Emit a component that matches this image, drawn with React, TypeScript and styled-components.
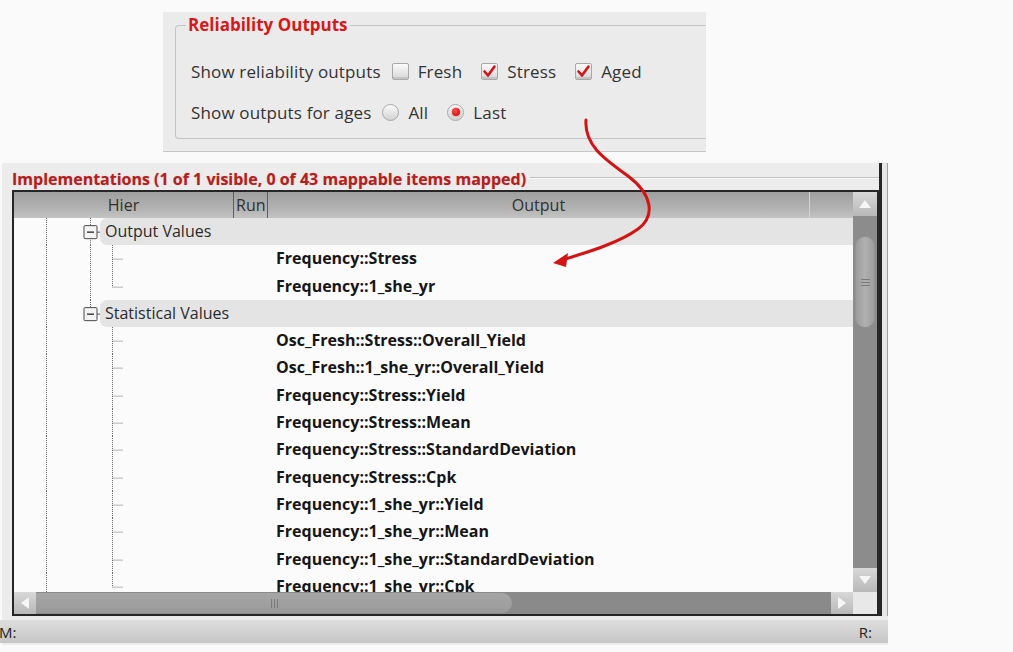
import React from 'react'
import styled, { createGlobalStyle } from 'styled-components'

const ROW_H = 27.3
const MID = ROW_H / 2

const GlobalStyle = createGlobalStyle`
  html, body {
    margin: 0;
    padding: 0;
    background: #fafafa;
  }
  body {
    font-family: 'Open Sans', 'Liberation Sans', sans-serif;
  }
`

interface TreeRow {
  kind: 'group' | 'item'
  label: string
  lastChild?: boolean
  lastGroup?: boolean
}

const rows: TreeRow[] = [
  { kind: 'group', label: 'Output Values' },
  { kind: 'item', label: 'Frequency::Stress' },
  { kind: 'item', label: 'Frequency::1_she_yr', lastChild: true },
  { kind: 'group', label: 'Statistical Values', lastGroup: true },
  { kind: 'item', label: 'Osc_Fresh::Stress::Overall_Yield', lastGroup: true },
  { kind: 'item', label: 'Osc_Fresh::1_she_yr::Overall_Yield', lastGroup: true },
  { kind: 'item', label: 'Frequency::Stress::Yield', lastGroup: true },
  { kind: 'item', label: 'Frequency::Stress::Mean', lastGroup: true },
  { kind: 'item', label: 'Frequency::Stress::StandardDeviation', lastGroup: true },
  { kind: 'item', label: 'Frequency::Stress::Cpk', lastGroup: true },
  { kind: 'item', label: 'Frequency::1_she_yr::Yield', lastGroup: true },
  { kind: 'item', label: 'Frequency::1_she_yr::Mean', lastGroup: true },
  { kind: 'item', label: 'Frequency::1_she_yr::StandardDeviation', lastGroup: true },
  { kind: 'item', label: 'Frequency::1_she_yr::Cpk', lastGroup: true, lastChild: true },
]

const L0 = 32.5
const L1 = 76.5
const L2 = 98.5

const Dots: React.FC<{ x1: number; y1: number; x2: number; y2: number }> = props => (
  <line {...props} stroke="#6a6a6a" strokeWidth={1} strokeDasharray="1 1" />
)

const GroupGuides: React.FC<{ lastGroup?: boolean }> = ({ lastGroup }) => (
  <GuideSvg width={86} height={ROW_H}>
    <Dots x1={L0} y1={0} x2={L0} y2={ROW_H} />
    <Dots x1={L1} y1={0} x2={L1} y2={MID - 6.5} />
    {!lastGroup && <Dots x1={L1} y1={MID + 6.5} x2={L1} y2={ROW_H} />}
    <rect x={70} y={MID - 6} width={13} height={13} fill="#f4f4f4" stroke="#4a4a4a" strokeWidth={1} rx={1} />
    <line x1={73} y1={MID + 0.5} x2={80} y2={MID + 0.5} stroke="#333" strokeWidth={1.4} />
    <line x1={83} y1={MID + 0.5} x2={86} y2={MID + 0.5} stroke="#555" strokeWidth={1} />
  </GuideSvg>
)

const ItemGuides: React.FC<{ lastChild?: boolean; lastGroup?: boolean }> = ({
  lastChild,
  lastGroup,
}) => (
  <GuideSvg width={112} height={ROW_H}>
    <Dots x1={L0} y1={0} x2={L0} y2={ROW_H} />
    {!lastGroup && <Dots x1={L1} y1={0} x2={L1} y2={ROW_H} />}
    <Dots x1={L2} y1={0} x2={L2} y2={lastChild ? MID + 0.5 : ROW_H} />
    <Dots x1={L2} y1={MID + 0.5} x2={109} y2={MID + 0.5} />
  </GuideSvg>
)

const CheckBox: React.FC<{ checked?: boolean }> = ({ checked }) => (
  <Box>
    {checked && (
      <svg width={15} height={15} viewBox="0 0 15 15">
        <path d="M2.5 7.5 L6 11.5 L12.5 2.5" fill="none" stroke="#d41414" strokeWidth={2.6} strokeLinecap="round" strokeLinejoin="round" />
      </svg>
    )}
  </Box>
)

const Radio: React.FC<{ selected?: boolean }> = ({ selected }) => (
  <RadioBox>{selected && <RadioDot />}</RadioBox>
)

export default function App() {
  return (
    <Page>
      <GlobalStyle />
      <TopPanel>
        <GroupBox>
          <Legend>Reliability Outputs</Legend>
          <GroupBody>
            <OptionRow>
              <Caption>Show reliability outputs</Caption>
              <Option>
                <CheckBox />
                Fresh
              </Option>
              <Option>
                <CheckBox checked />
                Stress
              </Option>
              <Option>
                <CheckBox checked />
                Aged
              </Option>
            </OptionRow>
            <OptionRow>
              <Caption>Show outputs for ages</Caption>
              <Option>
                <Radio />
                All
              </Option>
              <Option>
                <Radio selected />
                Last
              </Option>
            </OptionRow>
          </GroupBody>
        </GroupBox>
      </TopPanel>

      <ImplPanel>
        <Upper>
          <Main>
            <TitleBar>
              <PanelTitle>
                Implementations (1 of 1 visible, 0 of 43 mappable items mapped)
              </PanelTitle>
              <TitleRule />
            </TitleBar>
            <TreeBox>
              <TreeArea>
                <Header>
                  <HeaderCell width={220} align="center" sep="dark">
                    Hier
                  </HeaderCell>
                  <HeaderCell width={34} align="left" sep="dark">
                    Run
                  </HeaderCell>
                  <HeaderCell width={542} align="center" sep="light">
                    Output
                  </HeaderCell>
                  <HeaderFill />
                </Header>
                <Body>
                  {rows.map(row =>
                    row.kind === 'group' ? (
                      <Row key={row.label}>
                        <GroupGuides lastGroup={row.lastGroup} />
                        <Band>{row.label}</Band>
                      </Row>
                    ) : (
                      <Row key={row.label}>
                        <HierCell>
                          <ItemGuides lastChild={row.lastChild} lastGroup={row.lastGroup} />
                        </HierCell>
                        <ItemText>{row.label}</ItemText>
                      </Row>
                    ),
                  )}
                </Body>
              </TreeArea>

              <VScroll>
                <ScrollButton>
                  <svg width={12} height={8} viewBox="0 0 12 8">
                    <path d="M0 8 L6 0 L12 8 Z" fill="#f6f6f6" />
                  </svg>
                </ScrollButton>
                <VTrack>
                  <VThumb>
                    <Grip vertical={false}>
                      <i />
                      <i />
                      <i />
                    </Grip>
                  </VThumb>
                </VTrack>
                <ScrollButton>
                  <svg width={12} height={8} viewBox="0 0 12 8">
                    <path d="M0 0 L6 8 L12 0 Z" fill="#f6f6f6" />
                  </svg>
                </ScrollButton>
              </VScroll>

              <HScroll>
                <HButton>
                  <svg width={8} height={12} viewBox="0 0 8 12">
                    <path d="M8 0 L0 6 L8 12 Z" fill="#f6f6f6" />
                  </svg>
                </HButton>
                <HTrack>
                  <HThumb>
                    <Grip vertical>
                      <i />
                      <i />
                      <i />
                    </Grip>
                  </HThumb>
                </HTrack>
                <HButton>
                  <svg width={8} height={12} viewBox="0 0 8 12">
                    <path d="M0 0 L8 6 L0 12 Z" fill="#f6f6f6" />
                  </svg>
                </HButton>
              </HScroll>
              <Corner />
            </TreeBox>
          </Main>
          <RightRim />
        </Upper>
        <StatusBar>
          <StatusText>M:</StatusText>
          <StatusText>R:</StatusText>
        </StatusBar>
      </ImplPanel>

      <Annotation width={1013} height={652} viewBox="0 0 1013 652">
        <path
          d="M586 120 C584 146 606 160 628 176 C652 194 656 216 638 229 C620 242 592 251 562 260"
          fill="none"
          stroke="#d21414"
          strokeWidth={3}
          strokeLinecap="round"
        />
        <path d="M553 263 L568 253 L566 267 Z" fill="#d21414" />
      </Annotation>
    </Page>
  )
}

const Page = styled.div`
  position: relative;
  width: 1013px;
  height: 652px;
  padding-top: 12px;
  box-sizing: border-box;
  overflow: hidden;
  background: #fafafa;
  color: #333;
`

const TopPanel = styled.section`
  margin-left: 163px;
  width: 543px;
  height: 140px;
  box-sizing: border-box;
  padding: 3px 0 0 12px;
  background: #ebebeb;
  border-bottom: 1px solid #c6c6c6;
`

const GroupBox = styled.fieldset`
  margin: 0;
  height: 124px;
  box-sizing: border-box;
  min-width: 0;
  padding: 0 0 0 10px;
  border: 1px solid #c4c4c4;
  border-right: none;
  border-radius: 4px 0 0 4px;
`

const Legend = styled.legend`
  padding: 0 2px;
  line-height: 20px;
  font-size: 17px;
  font-weight: 700;
  color: #d81818;
`

const GroupBody = styled.div`
  display: flex;
  flex-direction: column;
  gap: 11px;
  padding: 21px 0 0 5px;
`

const OptionRow = styled.div`
  display: flex;
  align-items: center;
  gap: 19px;
  height: 30px;
  font-size: 17px;
  letter-spacing: 0.15px;
  color: #333;
  white-space: nowrap;
`

const Caption = styled.span`
  margin-right: -8px;
`

const Option = styled.label`
  display: flex;
  align-items: center;
  gap: 9px;
`

const Box = styled.span`
  display: flex;
  align-items: center;
  justify-content: center;
  width: 17px;
  height: 17px;
  box-sizing: border-box;
  border: 1px solid #a8a8a8;
  border-radius: 2px;
  background: linear-gradient(#fbfbfb, #d6d6d6);
  box-shadow: inset 0 -2px 0 #c4c4c4;
`

const RadioBox = styled.span`
  display: flex;
  align-items: center;
  justify-content: center;
  width: 17px;
  height: 17px;
  box-sizing: border-box;
  border: 1px solid #a8a8a8;
  border-radius: 50%;
  background: linear-gradient(#fbfbfb, #d2d2d2);
`

const RadioDot = styled.span`
  width: 8px;
  height: 8px;
  border-radius: 50%;
  background: radial-gradient(circle at 40% 35%, #ff4a4a, #c40000);
  box-shadow: 0 0 2px rgba(210, 0, 0, 0.6);
`

const ImplPanel = styled.section`
  margin: 11px 0 0 2px;
  width: 886px;
  height: 482px;
  display: flex;
  flex-direction: column;
  background: #ececec;
`

const Upper = styled.div`
  display: flex;
`

const Main = styled.div`
  flex: 1;
  display: flex;
  flex-direction: column;
  padding-left: 10px;
`

const TitleBar = styled.div`
  display: flex;
  align-items: center;
  height: 27px;
  box-sizing: border-box;
  padding-top: 5px;
`

const PanelTitle = styled.span`
  font-size: 16px;
  font-weight: 700;
  color: #b51f1f;
  white-space: nowrap;
  text-shadow: 0 0 1px rgba(190, 30, 30, 0.35);
`

const TitleRule = styled.div`
  flex: 1;
  height: 1px;
  margin: -3px 0 0 4px;
  background: #c2c2c2;
  box-shadow: 0 1px 0 #f8f8f8;
`

const TreeBox = styled.div`
  height: 426px;
  box-sizing: border-box;
  border: 2px solid #262626;
  display: grid;
  grid-template-columns: 1fr 24px;
  grid-template-rows: 1fr 22px;
  background: #fbfbfb;
`

const TreeArea = styled.div`
  display: flex;
  flex-direction: column;
  min-height: 0;
  overflow: hidden;
`

const Header = styled.div`
  display: flex;
  height: 26px;
  flex-shrink: 0;
  background: linear-gradient(#9f9f9f, #b3b3b3 65%, #c3c3c3);
  font-size: 16px;
  color: #303030;
`

const HeaderCell = styled.div<{ width: number; align: 'left' | 'center'; sep: 'dark' | 'light' }>`
  width: ${props => props.width}px;
  box-sizing: border-box;
  line-height: 26px;
  text-align: ${props => props.align};
  padding-left: ${props => (props.align === 'left' ? '2px' : '0')};
  border-right: 1px solid ${props => (props.sep === 'dark' ? '#5e5e5e' : '#d4d4d4')};
  white-space: nowrap;
  overflow: hidden;
`

const HeaderFill = styled.div`
  flex: 1;
`

const Body = styled.div`
  flex: 1;
  overflow: hidden;
  background: #fbfbfb;
`

const Row = styled.div`
  display: flex;
  height: ${ROW_H}px;
`

const GuideSvg = styled.svg`
  display: block;
  flex-shrink: 0;
`

const Band = styled.div`
  flex: 1;
  padding-left: 5px;
  border-radius: 7px 0 0 7px;
  background: #e4e4e4;
  font-size: 16px;
  line-height: ${ROW_H}px;
  color: #2b2b2b;
`

const HierCell = styled.div`
  width: 254px;
  flex-shrink: 0;
`

const ItemText = styled.div`
  padding-left: 8px;
  font-size: 16px;
  font-weight: 700;
  line-height: ${ROW_H}px;
  color: #161616;
  white-space: nowrap;
`

const VScroll = styled.div`
  display: flex;
  flex-direction: column;
  background: #8c8c8c;
`

const ScrollButton = styled.div`
  display: flex;
  align-items: center;
  justify-content: center;
  height: 24px;
  flex-shrink: 0;
  background: linear-gradient(#d8d8d8, #b8b8b8);
`

const VTrack = styled.div`
  flex: 1;
  padding: 20px 2px 0;
`

const VThumb = styled.div`
  display: flex;
  align-items: center;
  justify-content: center;
  height: 90px;
  border-radius: 10px;
  background: linear-gradient(90deg, #9c9c9c, #b0b0b0 50%, #9e9e9e);
  border: 1px solid #949494;
`

const Grip = styled.div<{ vertical: boolean }>`
  display: flex;
  flex-direction: ${props => (props.vertical ? 'row' : 'column')};
  gap: 2px;

  > i {
    display: block;
    background: #7a7a7a;
    width: ${props => (props.vertical ? '1px' : '9px')};
    height: ${props => (props.vertical ? '9px' : '1px')};
  }
`

const HScroll = styled.div`
  display: flex;
  background: #8a8a8a;
`

const HButton = styled.div`
  display: flex;
  align-items: center;
  justify-content: center;
  width: 22px;
  flex-shrink: 0;
  background: linear-gradient(#d8d8d8, #b8b8b8);
`

const HTrack = styled.div`
  flex: 1;
  padding: 1px 0;
`

const HThumb = styled.div`
  display: flex;
  align-items: center;
  justify-content: center;
  width: 476px;
  height: 100%;
  box-sizing: border-box;
  border-radius: 0 10px 10px 0;
  background: linear-gradient(#a6a6a6, #9a9a9a);
`

const Corner = styled.div`
  background: #e8e8e8;
`

const RightRim = styled.div`
  width: 9px;
  box-sizing: border-box;
  border-left: 3px solid #262626;
  border-right: 1px solid #a0a0a0;
  background: #e6e6e6;
`

const StatusBar = styled.div`
  display: flex;
  align-items: center;
  justify-content: space-between;
  height: 23px;
  margin: 4px 0 0 -2px;
  padding-right: 16px;
  background: linear-gradient(#dedede, #c6c6c6);
  font-size: 15px;
  color: #222;
`

const StatusText = styled.span`
  &:first-child {
    margin-left: -1px;
  }
`

const Annotation = styled.svg`
  position: absolute;
  left: 0;
  top: 0;
  pointer-events: none;
`
